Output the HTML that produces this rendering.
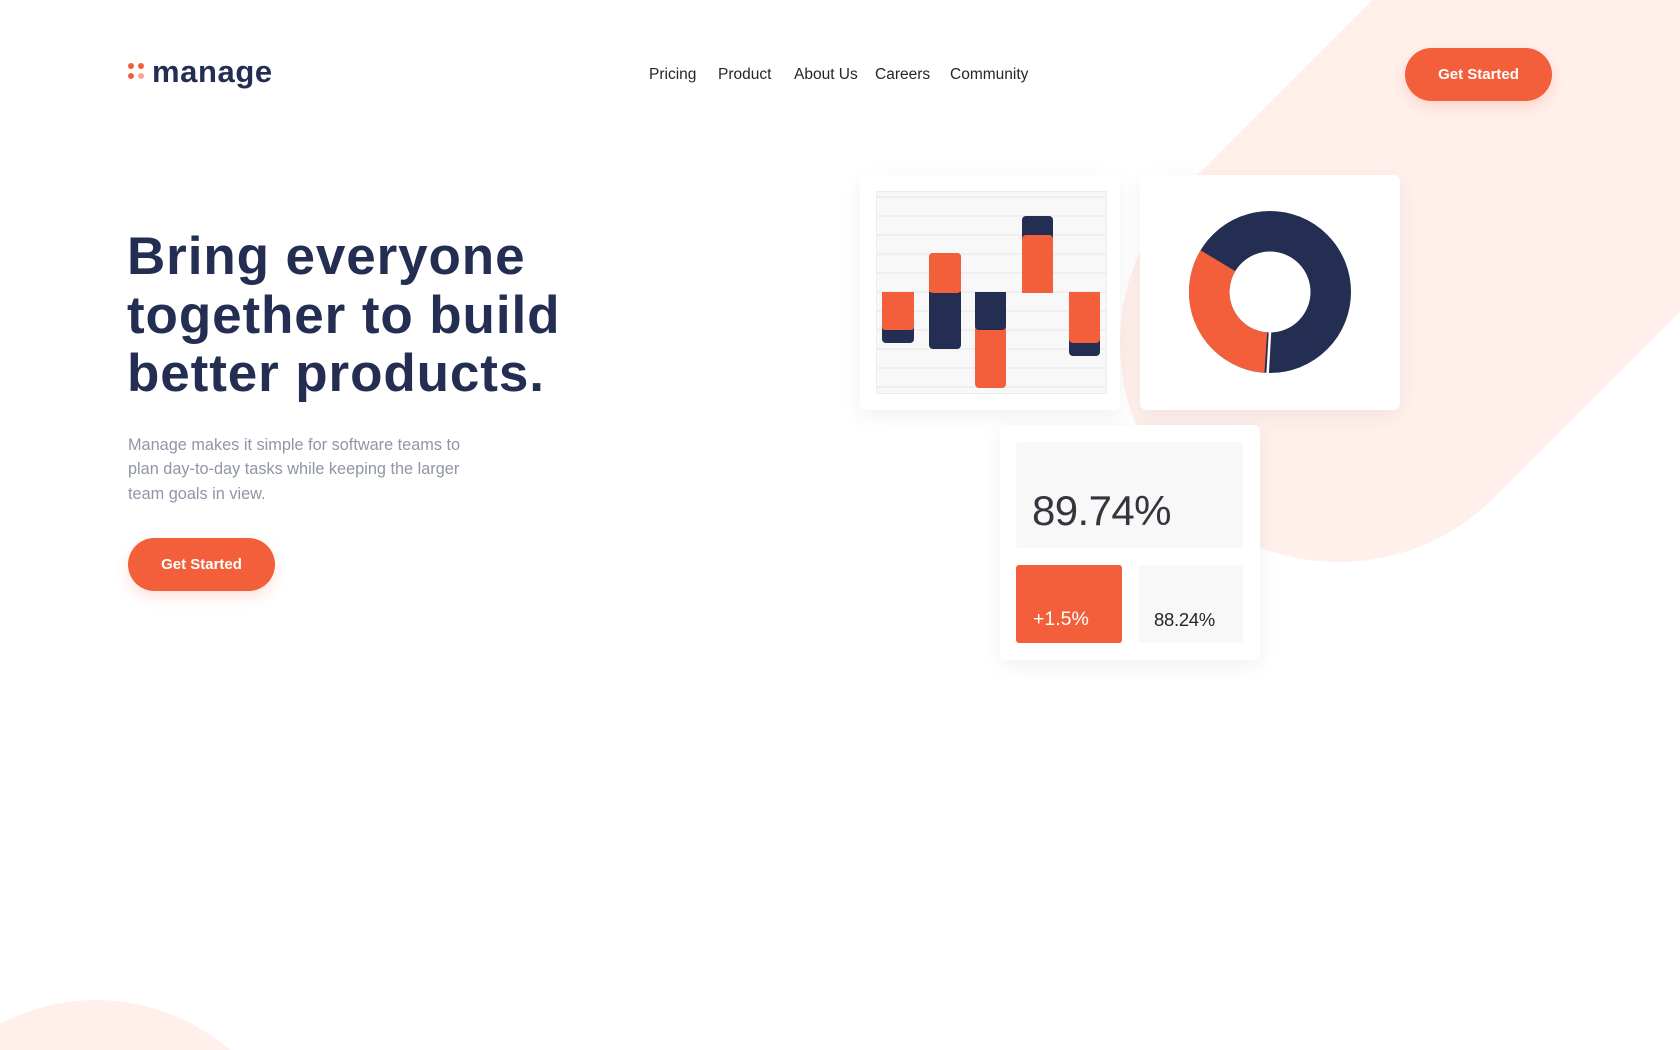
<!DOCTYPE html>
<html><head><meta charset="utf-8"><style>
*{margin:0;padding:0;box-sizing:border-box}
html,body{width:1680px;height:1050px;overflow:hidden}
body{background:#fff;position:relative;font-family:"Liberation Sans",sans-serif}
.abs{position:absolute}
.btn{position:absolute;background:#f25f3a;color:#fff;font-weight:bold;font-size:15px;border-radius:27px;display:flex;align-items:center;justify-content:center;box-shadow:0 6px 14px rgba(242,95,58,.18)}
.nav a{position:absolute;top:66px;font-size:15.5px;color:#25252d;text-decoration:none;white-space:nowrap}
.card{position:absolute;background:#fff;border-radius:6px;box-shadow:0 6px 22px rgba(0,0,0,.06)}
</style></head><body>
<svg class="abs" style="left:0;top:0" width="1680" height="1050">
<line x1="1339" y1="343" x2="2339" y2="-657" stroke="#fff0ec" stroke-width="438" stroke-linecap="round"/>
<circle cx="96" cy="1205" r="205" fill="#fff0ec"/>
</svg>
<div class="abs" style="left:128px;top:63px;width:6px;height:6px;border-radius:50%;background:#f25f3a"></div>
<div class="abs" style="left:138px;top:63px;width:6px;height:6px;border-radius:50%;background:#f25f3a"></div>
<div class="abs" style="left:128px;top:73px;width:6px;height:6px;border-radius:50%;background:#f25f3a"></div>
<div class="abs" style="left:138px;top:73px;width:6px;height:6px;border-radius:50%;background:#f9a58f"></div>
<div class="abs" style="left:152px;top:54px;font-size:31px;font-weight:bold;color:#242d52;letter-spacing:0.6px">manage</div>
<div class="nav">
<a style="left:649px">Pricing</a><a style="left:718px">Product</a><a style="left:794px">About Us</a><a style="left:875px">Careers</a><a style="left:950px">Community</a>
</div>
<div class="btn" style="left:1405px;top:48px;width:147px;height:53px">Get Started</div>
<h1 class="abs" style="left:127px;top:228px;font-size:53px;line-height:58.5px;color:#242d52;font-weight:bold;letter-spacing:0.9px;white-space:nowrap">Bring everyone<br>together to build<br>better products.</h1>
<p class="abs" style="left:128px;top:433px;font-size:16.3px;line-height:24.3px;color:#9095a7;width:350px">Manage makes it simple for software teams to plan day-to-day tasks while keeping the larger team goals in view.</p>
<div class="btn" style="left:128px;top:538px;width:147px;height:53px">Get Started</div>
<div class="card" style="left:860px;top:175px;width:260px;height:235px"></div>
<svg class="abs" style="left:876px;top:191px" width="231" height="203">
<rect x="0.5" y="0.5" width="230" height="202" fill="#f8f8f8" stroke="#ececec"/>
<g stroke="#ececec" stroke-width="1.5"><line x1="0" x2="231" y1="6" y2="6"/><line x1="0" x2="231" y1="25" y2="25"/><line x1="0" x2="231" y1="44" y2="44"/><line x1="0" x2="231" y1="63" y2="63"/><line x1="0" x2="231" y1="82" y2="82"/><line x1="0" x2="231" y1="101" y2="101"/><line x1="0" x2="231" y1="120" y2="120"/><line x1="0" x2="231" y1="139" y2="139"/><line x1="0" x2="231" y1="158" y2="158"/><line x1="0" x2="231" y1="177" y2="177"/><line x1="0" x2="231" y1="196" y2="196"/></g>
<rect x="6" y="101" width="32" height="51" rx="4" fill="#242d52"/><rect x="6" y="101" width="32" height="38" rx="3" fill="#f25f3a"/><rect x="6" y="101" width="32" height="6" fill="#f25f3a"/>
<rect x="53" y="62" width="32" height="96" rx="4" fill="#242d52"/><rect x="53" y="62" width="32" height="40" rx="4" fill="#f25f3a"/><rect x="53" y="95" width="32" height="6" fill="#f25f3a"/>
<rect x="99" y="101" width="31" height="96" rx="4" fill="#f25f3a"/><rect x="99" y="101" width="31" height="38" rx="4" fill="#242d52"/><rect x="99" y="101" width="31" height="6" fill="#242d52"/>
<rect x="146" y="25" width="31" height="77" rx="4" fill="#242d52"/><rect x="146" y="44" width="31" height="58" rx="4" fill="#f25f3a"/><rect x="146" y="95" width="31" height="7" fill="#f25f3a"/>
<rect x="193" y="101" width="31" height="64" rx="4" fill="#242d52"/><rect x="193" y="101" width="31" height="51" rx="4" fill="#f25f3a"/><rect x="193" y="101" width="31" height="6" fill="#f25f3a"/>
</svg>
<div class="card" style="left:1140px;top:175px;width:260px;height:235px"></div>
<svg class="abs" style="left:1140px;top:175px" width="260" height="235">
<g transform="translate(130,117)">
<circle r="60.75" fill="none" stroke="#242d52" stroke-width="40.5"/>
<path d="M -4.2 60.6 A 60.75 60.75 0 0 1 -52.1 -31.3" fill="none" stroke="#f25f3a" stroke-width="40.5"/>
<line x1="0" y1="40" x2="-2.4" y2="82" stroke="#fff" stroke-width="2.5"/>
</g></svg>
<div class="card" style="left:1000px;top:425px;width:260px;height:235px"></div>
<div class="abs" style="left:1016px;top:442px;width:227px;height:106px;background:#f8f8f8;border-radius:3px"></div>
<div class="abs" style="left:1032px;top:487px;font-size:42px;color:#33363d;letter-spacing:-0.6px">89.74%</div>
<div class="abs" style="left:1016px;top:565px;width:106px;height:78px;background:#f25f3a;border-radius:3px"></div>
<div class="abs" style="left:1033px;top:608px;font-size:19.5px;color:#fff">+1.5%</div>
<div class="abs" style="left:1138px;top:565px;width:105px;height:78px;background:#f8f8f8;border-radius:3px"></div>
<div class="abs" style="left:1154px;top:609px;font-size:18.5px;color:#25252d;letter-spacing:-0.3px">88.24%</div>
</body></html>
